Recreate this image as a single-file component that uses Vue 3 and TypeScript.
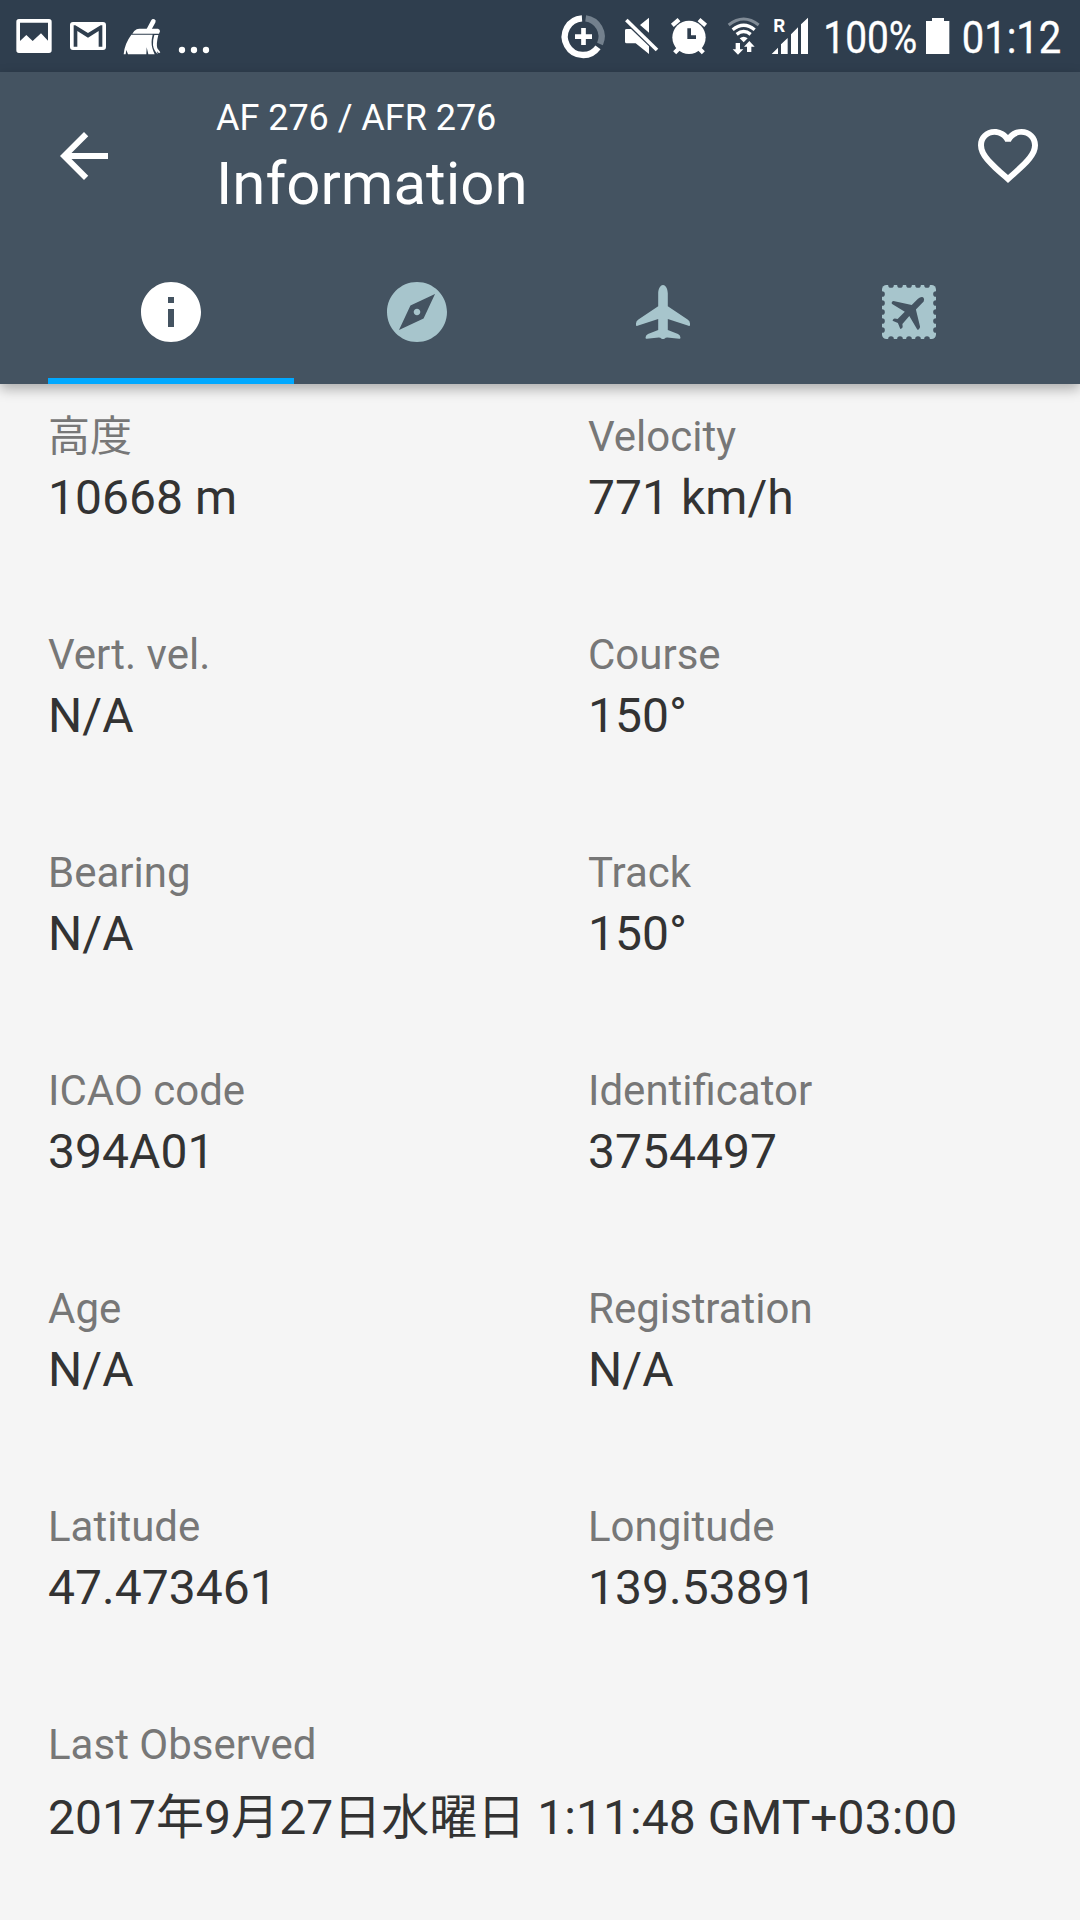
<script setup lang="ts">
import { ref } from 'vue'

interface Field {
  label: string
  value: string
  wide?: boolean
}

const flight = 'AF 276 / AFR 276'
const title = 'Information'
const tabs = ['info', 'compass', 'plane', 'stamp'] as const
const active = ref<(typeof tabs)[number]>('info')

const perforation = [6, 9, 12, 15, 18]

const fields: Field[] = [
  { label: '高度', value: '10668 m' },
  { label: 'Velocity', value: '771 km/h' },
  { label: 'Vert. vel.', value: 'N/A' },
  { label: 'Course', value: '150°' },
  { label: 'Bearing', value: 'N/A' },
  { label: 'Track', value: '150°' },
  { label: 'ICAO code', value: '394A01' },
  { label: 'Identificator', value: '3754497' },
  { label: 'Age', value: 'N/A' },
  { label: 'Registration', value: 'N/A' },
  { label: 'Latitude', value: '47.473461' },
  { label: 'Longitude', value: '139.53891' },
  { label: 'Last Observed', value: '2017年9月27日水曜日 1:11:48 GMT+03:00', wide: true },
]
</script>

<template>
  <div class="screen">
    <div class="status">
      <div class="status-group">
        <svg width="60" height="72" viewBox="0 0 180 216">
          <path fill="#fff" fill-rule="evenodd" d="M57 57H147Q155 57 155 65V151Q155 159 147 159H57Q49 159 49 151V65Q49 57 57 57ZM60 68V123L79 105L98 123L123 100L144 122V68Z" />
        </svg>
        <svg width="55" height="72" viewBox="180 0 165 216">
          <path fill="#fff" fill-rule="evenodd" d="M219 66H309Q318 66 318 75V141Q318 150 309 150H219Q210 150 210 141V75Q210 66 219 66ZM221 76V140H232V93L264 113L296 93V140H307V76H302L264 99L226 76Z" />
        </svg>
        <svg width="55" height="72" viewBox="345 0 165 216">
          <path fill="none" stroke="#fff" stroke-width="14" stroke-linecap="round" d="M460 64L446 90" />
          <path fill="#fff" d="M410 88Q413 86 418 86H474Q480 88 480 94L477 101H397Q402 92 410 88ZM394 104H458Q452 128 457 144Q460 155 464 163H445L440 142L439 163H384L379 150L377 163H371Q373 132 394 104ZM463 105H475Q468 132 472 145L481 157L477 160L471 154L473 163Q461 151 459 136Q458 120 463 105Z" />
        </svg>
        <svg width="50" height="72" viewBox="510 0 150 216" fill="#fff">
          <circle cx="546" cy="150" r="9.5" /><circle cx="582" cy="150" r="9.5" /><circle cx="618" cy="150" r="9.5" />
        </svg>
      </div>
      <div class="status-group">
        <svg width="60" height="72" viewBox="45 0 180 216" fill="none">
          <path stroke="#fff" stroke-width="19" d="M126 55A55 55 0 1 0 174 142" />
          <path stroke="#73808d" stroke-width="19" d="M137 55A55 55 0 0 1 180 132" />
          <path stroke="#fff" stroke-width="14" d="M105 110H156M130.500 84V135" />
        </svg>
        <svg width="50" height="72" viewBox="225 0 150 216">
          <path fill="#fff" d="M300 75L327 53V98ZM255 91Q255 87 260 87H273L327 139V162L287 130H260Q255 130 255 125Z" />
          <path stroke="#fff" stroke-width="11" d="M259 60L351 150" />
        </svg>
        <svg width="50" height="72" viewBox="375 0 150 216">
          <circle cx="447" cy="112" r="50" fill="#fff" />
          <path fill="none" stroke="#fff" stroke-width="13" d="M397 76L417 59M477 59L497 76M404 158L418 144M490 158L476 144" />
          <path fill="none" stroke="#2f3e4e" stroke-width="11" d="M447.500 85V111.500H468" />
        </svg>
        <svg width="50" height="72" viewBox="525 0 150 216">
          <path fill="none" stroke="#808b96" stroke-width="9" d="M566 75Q611 39 656 75" />
          <path fill="none" stroke="#fff" stroke-width="10" d="M578 89Q611 62 644 89M590 103Q611 86 632 103" />
          <path fill="#fff" d="M599 115Q611 106 623 115L611 127ZM587 129H600V148H610L594 164L578 148H587ZM621 156H634V140H644L628 123L612 140H621Z" />
        </svg>
        <svg width="50" height="72" viewBox="675 0 150 216" fill="#fff">
          <text class="roaming" x="700" y="97" textLength="36" lengthAdjust="spacingAndGlyphs">R</text>
          <path d="M695 162L714 143V162ZM723 133L743 114V162H723ZM753 103L774 82V162H753ZM783 73L804 53V162H783Z" />
        </svg>
        <svg width="107" height="72" viewBox="45 0 321 216" fill="#fff">
          <text class="clock" x="70" y="158" textLength="282" lengthAdjust="spacingAndGlyphs">100%</text>
        </svg>
        <svg width="33" height="72" viewBox="366 0 99 216" fill="#fff">
          <path d="M378 63H396V54H432V63H448V162H378Z" />
        </svg>
        <svg width="125" height="72" viewBox="465 0 375 216" fill="#fff">
          <text class="clock" x="485" y="158" textLength="299" lengthAdjust="spacingAndGlyphs">01:12</text>
        </svg>
      </div>
    </div>

    <header class="header">
      <div class="toolbar">
        <svg class="icon" viewBox="0 0 24 24" fill="#fff">
          <path d="M20 11H7.830L13.420 5.410 12 4 4 12 12 20 13.410 18.590 7.830 13H20Z" />
        </svg>
        <div class="titles">
          <div class="flight">{{ flight }}</div>
          <div class="title">{{ title }}</div>
        </div>
        <svg class="icon" viewBox="0 0 24 24" fill="#fff">
          <path transform="translate(0 0.050) scale(1 0.980)" d="M16.500 3c-1.740 0-3.410.810-4.500 2.090C10.910 3.810 9.240 3 7.500 3 4.420 3 2 5.420 2 8.500c0 3.780 3.400 6.860 8.550 11.540L12 21.350l1.450-1.320C18.600 15.360 22 12.280 22 8.500 22 5.420 19.580 3 16.500 3zm-4.400 15.550l-.100.100-.100-.100C7.140 14.240 4 11.390 4 8.500 4 6.500 5.500 5 7.500 5c1.540 0 3.040.990 3.570 2.360h1.870C13.460 5.990 14.960 5 16.500 5c2 0 3.500 1.500 3.500 3.500 0 2.890-3.140 5.740-7.900 10.050z" />
        </svg>
      </div>
      <nav class="tabs">
        <button v-for="tab in tabs" :key="tab" class="tab" :class="{ active: tab === active }" @click="active = tab">
          <svg class="icon" viewBox="0 0 24 24" fill="currentColor">
            <path v-if="tab === 'info'" d="M12 2C6.480 2 2 6.480 2 12s4.480 10 10 10 10-4.480 10-10S17.520 2 12 2zm1 15h-2v-6h2v6zm0-8h-2V7h2v2z" />
            <path v-else-if="tab === 'compass'" d="M12 10.900c-.610 0-1.100.490-1.100 1.100s.490 1.100 1.100 1.100c.610 0 1.100-.490 1.100-1.100s-.490-1.100-1.100-1.100zM12 2C6.480 2 2 6.480 2 12s4.480 10 10 10 10-4.480 10-10S17.520 2 12 2zm2.190 12.190L6 18l3.810-8.190L18 6l-3.810 8.190z" />
            <path v-else-if="tab === 'plane'" d="M12 3C11 3 10.400 4.500 10.400 5.800V10.100L3.800 14.500Q3 15 3 15.800V16.300Q3 16.800 3.500 16.600L10.400 14.300V18L7 19.300Q6.200 19.700 6.200 20.400V20.700Q6.200 21 6.600 20.900L10.600 20.500Q11.200 20.500 11.400 20.800Q12 21.200 12.600 20.800Q12.800 20.500 13.400 20.500L17.400 20.900Q17.800 21 17.800 20.700V20.400Q17.800 19.700 17 19.300L13.600 18V14.300L20.500 16.600Q21 16.800 21 16.300V15.800Q21 15 20.200 14.500L13.600 10.100V5.800C13.600 4.500 13 3 12 3Z" />
            <template v-else>
              <mask id="perforated">
                <rect x="3" y="3" width="18" height="18" rx="1.500" fill="#fff" />
                <g fill="#000">
                  <template v-for="p in perforation" :key="p">
                    <circle :cx="p" cy="3" r="0.950" />
                    <circle :cx="p" cy="21" r="0.950" />
                    <circle cx="3" :cy="p" r="0.950" />
                    <circle cx="21" :cy="p" r="0.950" />
                  </template>
                  <path d="M12.900 9.700L15 7.600Q15.900 6.800 16.700 7.100Q17.300 7.600 16.900 8.500L14.300 11.200L15.700 16.900Q15.700 17.300 15.200 17.800Q14.800 18.100 14.600 17.600L12.100 13.300L9.800 16L9.900 17.100L9.400 17.600Q9.100 17.700 9 17.400L8.300 15.700L6.700 15Q6.300 14.800 6.700 14.500Q6.900 14.200 7.300 14.200L8.200 14.300L10.600 11.900L6.500 9.400Q6 9.100 6.300 8.700Q6.600 8.200 7.200 8.400Z" />
                </g>
              </mask>
              <rect x="3" y="3" width="18" height="18" mask="url(#perforated)" />
            </template>
          </svg>
        </button>
      </nav>
    </header>

    <main class="fields">
      <div v-for="field in fields" :key="field.label" class="field" :class="{ wide: field.wide }">
        <div class="label">{{ field.label }}</div>
        <div class="value">{{ field.value }}</div>
      </div>
    </main>
  </div>
</template>

<style>
body {
  background: #f5f5f5;
}
</style>

<style scoped>
.screen {
  width: 1080px;
  height: 1920px;
  overflow: hidden;
  background: #f5f5f5;
  font-family: Roboto, "Noto Sans CJK JP", sans-serif;
}
svg {
  display: block;
  flex: none;
  overflow: visible;
}
.status {
  display: flex;
  justify-content: space-between;
  height: 72px;
  background: #2f3e4e;
}
.status-group {
  display: flex;
  position: relative;
  z-index: 1;
}
.clock {
  font-size: 135px;
  stroke: #fff;
  stroke-width: 1px;
}
.roaming {
  font-size: 54px;
  font-weight: 700;
}
.header {
  height: 312px;
  background: #445361;
  box-shadow: 0 5px 12px rgba(0, 0, 0, 0.3);
}
.toolbar {
  display: flex;
  align-items: center;
  box-sizing: border-box;
  height: 168px;
  padding: 0 36px 0 48px;
}
.icon {
  width: 72px;
  height: 72px;
}
.titles {
  flex: 1;
  padding: 4px 0 0 96px;
  color: #fff;
}
.flight {
  font-size: 36px;
  line-height: 44px;
  letter-spacing: -0.04px;
}
.title {
  margin-top: 8px;
  font-size: 60px;
  line-height: 72px;
}
.tabs {
  display: flex;
  height: 144px;
  padding-left: 48px;
}
.tab {
  display: flex;
  align-items: center;
  justify-content: center;
  width: 246px;
  padding: 6px 0 0;
  border: 0;
  border-bottom: 6px solid transparent;
  background: none;
  color: #a7c5cc;
}
/* The indicator runs under the active tab only; its left end lines up with the back arrow's touch area. */
.tab.active {
  border-bottom-color: #00a8ff;
  color: #fff;
}
.fields {
  display: grid;
  grid-template-columns: 540px 1fr;
  row-gap: 96px;
  padding: 25px 0 0 48px;
}
.wide {
  grid-column: 1 / -1;
}
.label {
  font-size: 42px;
  line-height: 56px;
  color: #777;
}
.value {
  font-size: 48px;
  line-height: 66px;
  letter-spacing: 0.04px;
  color: #333;
}
.wide .value {
  line-height: 90px;
}
</style>
